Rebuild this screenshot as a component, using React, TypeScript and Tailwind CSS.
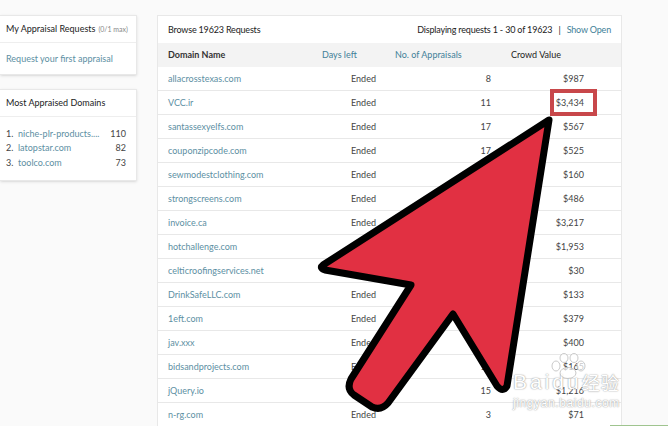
import React from 'react';

const rows = [
  ['allacrosstexas.com', 'Ended', '8', '$987'],
  ['VCC.ir', 'Ended', '11', '$3,434'],
  ['santassexyelfs.com', 'Ended', '17', '$567'],
  ['couponzipcode.com', 'Ended', '17', '$525'],
  ['sewmodestclothing.com', 'Ended', '16', '$160'],
  ['strongscreens.com', 'Ended', '16', '$486'],
  ['invoice.ca', 'Ended', '16', '$3,217'],
  ['hotchallenge.com', 'Ended', '16', '$1,953'],
  ['celticroofingservices.net', 'Ended', '16', '$30'],
  ['DrinkSafeLLC.com', 'Ended', '15', '$133'],
  ['1eft.com', 'Ended', '15', '$379'],
  ['jav.xxx', 'Ended', '15', '$400'],
  ['bidsandprojects.com', 'Ended', '15', '$165'],
  ['jQuery.io', 'Ended', '15', '$1,216'],
  ['n-rg.com', 'Ended', '3', '$71'],
];

const top = [
  ['niche-plr-products....', '110'],
  ['latopstar.com', '82'],
  ['toolco.com', '73'],
];

const Arrow = () => (
  <svg className="absolute left-0 top-0 pointer-events-none" width="668" height="426" viewBox="0 0 668 426">
    <path
      d="M549 120 L323 265 Q319 268 325 270 L411 285 L351 379 Q346 389 354 395 L372 407 Q381 411 388 403 L453 314 L497 386 Q503 393 507 386 Z"
      fill="#e13042"
      stroke="#000"
      strokeWidth="7"
      strokeLinejoin="round"
    />
  </svg>
);

const Watermark = () => (
  <div className="absolute left-[513px] top-[372px] text-white pointer-events-none [text-shadow:0_0_1px_#999,0_0_2px_#bbb]">
    <svg className="absolute left-[37px] -top-[19px]" width="37" height="26" viewBox="0 0 37 26" fill="#fff" fillOpacity="0.7" stroke="#bbb" strokeWidth="0.8">
      <ellipse cx="6" cy="13" rx="4" ry="5" />
      <ellipse cx="14" cy="5" rx="4" ry="4.5" />
      <ellipse cx="24" cy="5" rx="4" ry="4.5" />
      <ellipse cx="31" cy="13" rx="4" ry="5" />
      <ellipse cx="18" cy="20" rx="8" ry="5.5" />
    </svg>
    <div className="flex items-center h-[20px] text-[21px] tracking-[3px] font-['Liberation_Sans',sans-serif] whitespace-nowrap">
      <span>Baidu</span>
      <span className="font-['Noto_Sans_CJK_SC',sans-serif] text-[18px] tracking-[1px]">经验</span>
    </div>
    <div className="mt-[5px] text-[12px] leading-[13px] tracking-[0.6px] font-['Liberation_Sans',sans-serif] whitespace-nowrap">jingyan.baidu.com</div>
  </div>
);

export default function App() {
  return (
    <div className="relative w-[668px] h-[426px] overflow-hidden bg-[#fafafa] font-['Lato',sans-serif] text-[9px] text-[#444]">
      <div className="flex gap-[20px] pt-[15px]">
        <div className="w-[137px] flex flex-col gap-[14px] shrink-0">
          <div className="bg-white border border-l-0 border-[#e8e8e8] shadow-sm">
            <div className="h-[27px] flex items-center pl-[6px] border-b border-[#eee] text-[#222] whitespace-nowrap">
              My Appraisal Requests <span className="ml-[3px] text-[7px] text-[#888]">(0/1 max)</span>
            </div>
            <div className="h-[31px] flex items-center pl-[6px] text-[#5d8fa3]">Request your first appraisal</div>
          </div>
          <div className="bg-white border border-l-0 border-[#e8e8e8] shadow-sm">
            <div className="h-[27px] flex items-center pl-[6px] border-b border-[#eee] text-[#222]">Most Appraised Domains</div>
            <div className="pt-[9px] pb-[10px] pl-[6px] pr-[10px]">
              {top.map((t, i) => (
                <div key={t[0]} className="h-[14.67px] flex items-center">
                  <span className="w-[12px]">{i + 1}.</span>
                  <span className="text-[#5d8fa3] flex-1">{t[0]}</span>
                  <span>{t[1]}</span>
                </div>
              ))}
            </div>
          </div>
        </div>
        <div className="w-[465px] shrink-0 bg-white border border-[#e8e8e8] border-b-0">
          <div className="h-[27px] flex items-center justify-between pl-[10px] pr-[10px] text-[#222] tracking-[-0.18px]">
            <span>Browse 19623 Requests</span>
            <span>
              Displaying requests 1 - 30 of 19623 <span className="mx-1">|</span> <span className="text-[#3f7f98]">Show Open</span>
            </span>
          </div>
          <div className="h-[24px] grid grid-cols-[154px_53px_136px_1fr] items-center bg-[#f3f3f3] pl-[10px]">
            <span className="font-bold text-[#333]">Domain Name</span>
            <span className="text-[#3f7f98]">Days left</span>
            <span className="text-[#3f7f98] pl-[20px]">No. of Appraisals</span>
            <span className="text-[#222]">Crowd Value</span>
          </div>
          {rows.map((r) => (
            <div key={r[0]} className="h-[24px] grid grid-cols-[183px_24px_116px_93px] items-center pl-[10px] border-b border-[#e8e8e8]">
              <span className="text-[#5d8fa3]">{r[0]}</span>
              <span>{r[1]}</span>
              <span className="text-right">{r[2]}</span>
              <span className="text-right">{r[3]}</span>
            </div>
          ))}
        </div>
      </div>
      <div className="absolute left-[550px] top-[89px] w-[47px] h-[27px] border-[4px] border-[#c8474a]" />
      <Arrow />
      <Watermark />
      <div className="absolute left-[610px] top-[425px] w-[58px] h-[1px] bg-[#9fc48f]" />
    </div>
  );
}
